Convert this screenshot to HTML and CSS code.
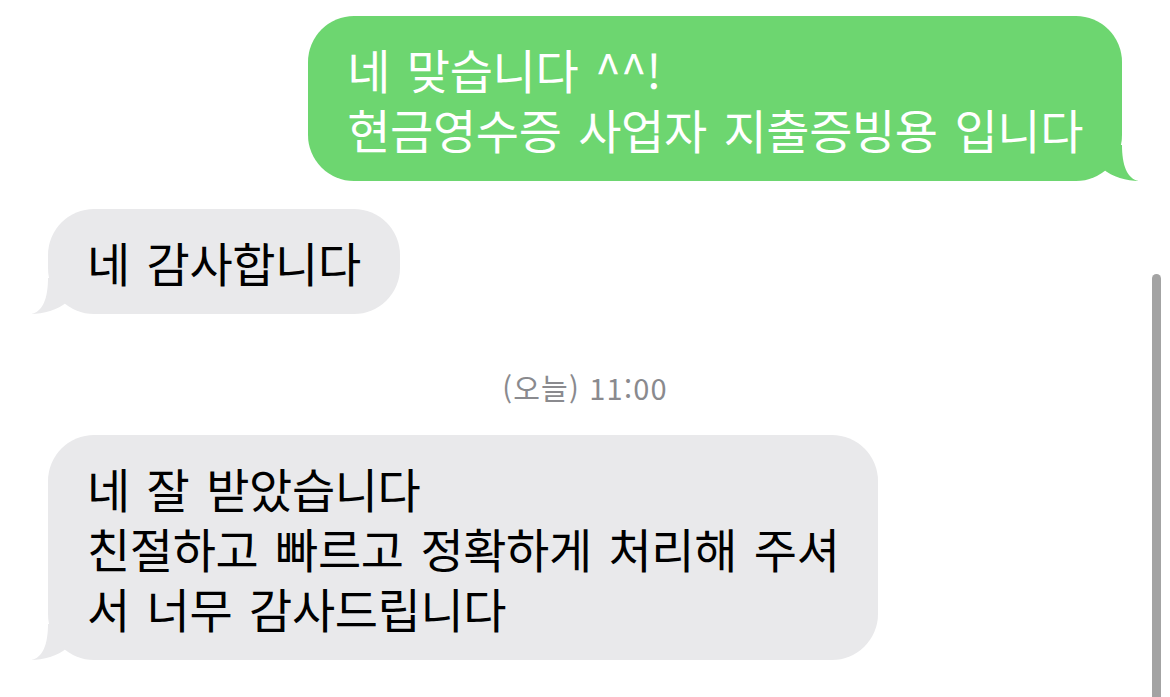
FILE: index.html
```html
<!DOCTYPE html>
<html lang="ko">
<head>
    <meta charset="UTF-8">
    <meta name="viewport" content="width=device-width, initial-scale=1.0">
    <title>메시지</title>
    <link rel="stylesheet" href="styles.css">
</head>
<body>

    <div class="thread">
        <div class="row row-sent">
            <div class="bubble sent">
                네 맞습니다 ^^!<br>
                현금영수증 사업자 지출증빙용 입니다
                <svg class="tail" width="60" height="40" viewBox="0 0 60 40"><path d="M43 4 C43 24 48 38 60 40 C48 40 33 36 24 28 L24 4 Z"/></svg>
            </div>
        </div>

        <div class="row row-received">
            <div class="bubble received">
                네 감사합니다
                <svg class="tail" width="60" height="40" viewBox="0 0 60 40"><path d="M43 4 C43 24 48 38 60 40 C48 40 33 36 24 28 L24 4 Z"/></svg>
            </div>
        </div>

        <p class="timestamp">(오늘) 11:00</p>

        <div class="row row-received">
            <div class="bubble received">
                네 잘 받았습니다<br>
                친절하고 빠르고 정확하게 처리해 주셔<br>
                서 너무 감사드립니다
                <svg class="tail" width="60" height="40" viewBox="0 0 60 40"><path d="M43 4 C43 24 48 38 60 40 C48 40 33 36 24 28 L24 4 Z"/></svg>
            </div>
        </div>
    </div>

    <!-- scroll indicator -->
    <div class="scroll-indicator"></div>

</body>
</html>
```

FILE: styles.css
```css
:root {
    --sent-color: #6dd670;
    --received-color: #e9e9eb;
    --muted-color: #8a8a8e;
}

body {
    margin: 0;
    padding: 0;
    background-color: #fff;
    font-family: "Noto Sans CJK KR", "Noto Sans", sans-serif;
    overflow: hidden;
}

.thread {
    display: flex;
    flex-direction: column;
    padding: 16px 48px 0;
}

.row {
    display: flex;
}

.row-sent {
    justify-content: flex-end;
    margin-bottom: 28px;
}

.row-received {
    justify-content: flex-start;
}

.bubble {
    position: relative;
    padding: 23px 39px 22px;
    border-radius: 46px;
    font-size: 47px;
    line-height: 60px;
    letter-spacing: -0.4px;
    word-spacing: 4px;
    white-space: nowrap;
}

.sent {
    background-color: var(--sent-color);
    color: #fff;
}

.received {
    background-color: var(--received-color);
    color: #000;
}

.tail {
    position: absolute;
    bottom: 0;
}

.sent .tail {
    right: -17px;
    fill: var(--sent-color);
}

.received .tail {
    left: -17px;
    transform: scaleX(-1);
    fill: var(--received-color);
}

.timestamp {
    margin: 56px 0 31px;
    text-align: center;
    font-size: 29px;
    line-height: 34px;
    letter-spacing: 1.2px;
    color: var(--muted-color);
}

.scroll-indicator {
    position: fixed;
    right: 9px;
    top: 274px;
    bottom: 0;
    width: 9px;
    background-color: #a3a3a3;
    border-radius: 5px 5px 0 0;
}
```
